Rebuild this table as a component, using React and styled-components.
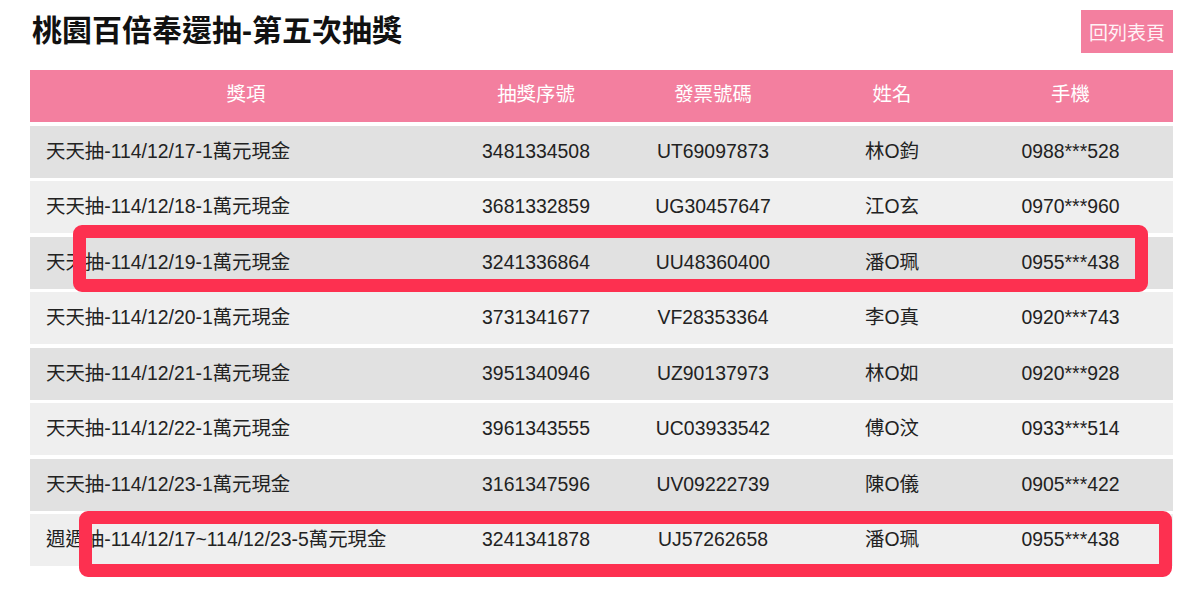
import React from 'react';
import styled, { createGlobalStyle } from 'styled-components';

const GlobalStyle = createGlobalStyle`
  body {
    margin: 0;
    background: #fff;
    font-family: "Liberation Sans", "Noto Sans CJK TC", sans-serif;
    color: #222;
  }
`;

const Page = styled.div`
  box-sizing: border-box;
  min-height: 100vh;
  padding: 10px 27px 30px 30px;
`;

const TopBar = styled.div`
  display: flex;
  justify-content: space-between;
  align-items: center;
  height: 43px;
`;

const Title = styled.h1`
  margin: 0 0 0 2px;
  font-size: 30px;
  font-weight: bold;
  color: #111;
  line-height: 40px;
  padding-bottom: 2px;
`;

const BackButton = styled.a`
  display: flex;
  align-items: center;
  justify-content: center;
  width: 92px;
  height: 43px;
  background: #f37f9f;
  color: #fff2f6;
  font-size: 19px;
  text-decoration: none;
`;

const Table = styled.div`
  margin-top: 17px;
  display: flex;
  flex-direction: column;
  gap: 3.5px;
`;

const Row = styled.div`
  position: relative;
  display: grid;
  grid-template-columns: 432px 148px 206px 152px 1fr;
  height: 52px;
  align-items: center;
  font-size: 19.4px;
  line-height: 24px;
  padding-bottom: ${p => (p.$head ? '4px' : '2px')};
  box-sizing: border-box;
  background: ${p => (p.$head ? '#f37f9f' : p.$odd ? '#e1e1e1' : '#efefef')};
  color: ${p => (p.$head ? '#fff' : '#222')};
`;

const Cell = styled.div`
  text-align: ${p => (p.$left ? 'left' : 'center')};
  padding-left: ${p => (p.$left ? '16px' : '0')};
  white-space: nowrap;
`;

const Highlight = styled.div`
  position: absolute;
  box-sizing: border-box;
  border: 13px solid #fd3050;
  border-radius: 9px;
  pointer-events: none;
`;

const rows = [
  ['天天抽-114/12/17-1萬元現金', '3481334508', 'UT69097873', '林O鈞', '0988***528'],
  ['天天抽-114/12/18-1萬元現金', '3681332859', 'UG30457647', '江O玄', '0970***960'],
  ['天天抽-114/12/19-1萬元現金', '3241336864', 'UU48360400', '潘O珮', '0955***438'],
  ['天天抽-114/12/20-1萬元現金', '3731341677', 'VF28353364', '李O真', '0920***743'],
  ['天天抽-114/12/21-1萬元現金', '3951340946', 'UZ90137973', '林O如', '0920***928'],
  ['天天抽-114/12/22-1萬元現金', '3961343555', 'UC03933542', '傅O汶', '0933***514'],
  ['天天抽-114/12/23-1萬元現金', '3161347596', 'UV09222739', '陳O儀', '0905***422'],
  ['週週抽-114/12/17~114/12/23-5萬元現金', '3241341878', 'UJ57262658', '潘O珮', '0955***438'],
];

// red annotation boxes drawn over two of the rows
const marks = {
  2: { top: -12, left: 43, width: 1075, height: 67 },
  7: { top: -3.5, left: 49, width: 1093, height: 66 },
};

export default function App() {
  return (
    <Page>
      <GlobalStyle />
      <TopBar>
        <Title>桃園百倍奉還抽-第五次抽獎</Title>
        <BackButton href="#">回列表頁</BackButton>
      </TopBar>
      <Table>
        <Row $head>
          <Cell>獎項</Cell>
          <Cell>抽獎序號</Cell>
          <Cell>發票號碼</Cell>
          <Cell>姓名</Cell>
          <Cell>手機</Cell>
        </Row>
        {rows.map((r, i) => (
          <Row key={i} $odd={i % 2 === 0}>
            <Cell $left>{r[0]}</Cell>
            <Cell>{r[1]}</Cell>
            <Cell>{r[2]}</Cell>
            <Cell>{r[3]}</Cell>
            <Cell>{r[4]}</Cell>
            {marks[i] && <Highlight style={marks[i]} />}
          </Row>
        ))}
      </Table>
    </Page>
  );
}
